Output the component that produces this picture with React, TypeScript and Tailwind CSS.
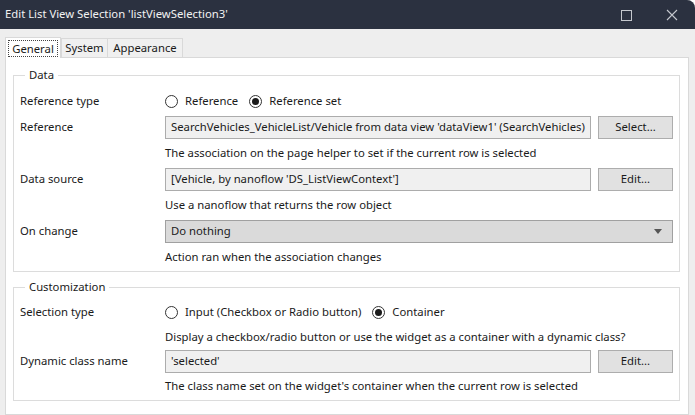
import React from "react";

const FONT = { fontFamily: '"Noto Sans", "Open Sans", sans-serif' };

const Radio = ({ checked, label }: { checked?: boolean; label: string }) => (
  <label className="flex items-center gap-[7px]">
    <span className="w-[13px] h-[13px] rounded-full border border-[#333] flex items-center justify-center bg-white">
      {checked && <span className="w-[7px] h-[7px] rounded-full bg-[#1a1a1a]" />}
    </span>
    <span>{label}</span>
  </label>
);

const Field = ({ value }: { value: string }) => (
  <div className="flex-1 min-w-0 h-[23px] bg-[#f0f0f0] border border-[#acacac] px-[5px] flex items-center whitespace-nowrap overflow-hidden">
    {value}
  </div>
);

const Button = ({ label }: { label: string }) => (
  <button className="w-[75px] shrink-0 h-[23px] bg-[#e1e1e1] border border-[#adadad] flex items-center justify-center">
    {label}
  </button>
);

const Row = ({ label, children }: { label?: string; children: React.ReactNode }) => (
  <>
    <div className="flex items-center">{label}</div>
    <div className="flex items-center min-w-0">{children}</div>
  </>
);

const Group = ({ title, className, children }: { title: string; className?: string; children: React.ReactNode }) => (
  <fieldset className={`ml-[7px] mr-[8px] min-w-0 border border-[#dcdcdc] pl-[6px] pr-[6px] ${className ?? ""}`}>
    <legend className="ml-[5px] px-[4px] leading-[16px]">{title}</legend>
    {children}
  </fieldset>
);

export default function App() {
  return (
    <div className="w-[695px] h-[415px] bg-white overflow-hidden text-[11.3px] text-[#1a1a1a]" style={FONT}>
      <div className="h-full flex flex-col bg-[#eeeeee] rounded-tr-[8px] overflow-hidden">
        <div className="h-[29px] shrink-0 bg-[#2b3140] flex items-center pl-[5px] text-[#f2f2f2]">
          <span className="flex-1">Edit List View Selection 'listViewSelection3'</span>
          <svg width="12" height="12" viewBox="0 0 12 12" className="mr-[34px]">
            <rect x="1.5" y="1.5" width="10" height="10" fill="none" stroke="#c4c7cd" strokeWidth="1" />
          </svg>
          <svg width="12" height="12" viewBox="0 0 12 12" className="mr-[17px]">
            <path d="M1 1 L11 11 M11 1 L1 11" stroke="#c4c7cd" strokeWidth="1.1" />
          </svg>
        </div>

        <div className="h-[28px] shrink-0 pl-[5px] flex items-end">
          <div className="relative z-10 -mb-px w-[56px] h-[21px] bg-white border border-b-0 border-[#d9d9d9] flex items-center justify-center">
            <span className="border border-dotted border-[#444] px-[3px] leading-[15px]">General</span>
          </div>
          <div className="w-[47px] h-[19px] bg-[#f0f0f0] border border-b-0 border-[#d9d9d9] flex items-center justify-center">
            System
          </div>
          <div className="w-[76px] h-[19px] -ml-px bg-[#f0f0f0] border border-b-0 border-[#d9d9d9] flex items-center justify-center">
            Appearance
          </div>
        </div>

        <div className="flex-1 ml-[5px] w-[684px] bg-white border border-[#d9d9d9]">
          <Group title="Data" className="mt-[9px] pt-[5px] pb-[1px]">
            <div className="grid grid-cols-[145px_minmax(0,1fr)] auto-rows-[26px]">
              <Row label="Reference type">
                <div className="flex items-center gap-[11px]">
                  <Radio label="Reference" />
                  <Radio checked label="Reference set" />
                </div>
              </Row>
              <Row label="Reference">
                <div className="flex-1 min-w-0 flex gap-[7px]">
                  <Field value="SearchVehicles_VehicleList/Vehicle from data view 'dataView1' (SearchVehicles)" />
                  <Button label="Select..." />
                </div>
              </Row>
              <Row>The association on the page helper to set if the current row is selected</Row>
              <Row label="Data source">
                <div className="flex-1 min-w-0 flex gap-[7px]">
                  <Field value="[Vehicle, by nanoflow 'DS_ListViewContext']" />
                  <Button label="Edit..." />
                </div>
              </Row>
              <Row>Use a nanoflow that returns the row object</Row>
              <Row label="On change">
                <div className="flex-1 h-[23px] bg-[#dadada] border border-[#a0a0a0] pl-[5px] pr-[10px] flex items-center justify-between">
                  <span>Do nothing</span>
                  <svg width="8" height="5" viewBox="0 0 8 5">
                    <path d="M0 0 L8 0 L4 5 Z" fill="#555" />
                  </svg>
                </div>
              </Row>
              <Row>Action ran when the association changes</Row>
            </div>
          </Group>

          <Group title="Customization" className="mt-[7px] pt-[4px] pb-[1px]">
            <div className="grid grid-cols-[145px_minmax(0,1fr)] grid-rows-[26px_24px_24px_26px]">
              <Row label="Selection type">
                <div className="flex items-center gap-[11px]">
                  <Radio label="Input (Checkbox or Radio button)" />
                  <Radio checked label="Container" />
                </div>
              </Row>
              <Row>Display a checkbox/radio button or use the widget as a container with a dynamic class?</Row>
              <Row label="Dynamic class name">
                <div className="flex-1 min-w-0 flex gap-[7px]">
                  <Field value="'selected'" />
                  <Button label="Edit..." />
                </div>
              </Row>
              <Row>The class name set on the widget's container when the current row is selected</Row>
            </div>
          </Group>
        </div>
      </div>
    </div>
  );
}
